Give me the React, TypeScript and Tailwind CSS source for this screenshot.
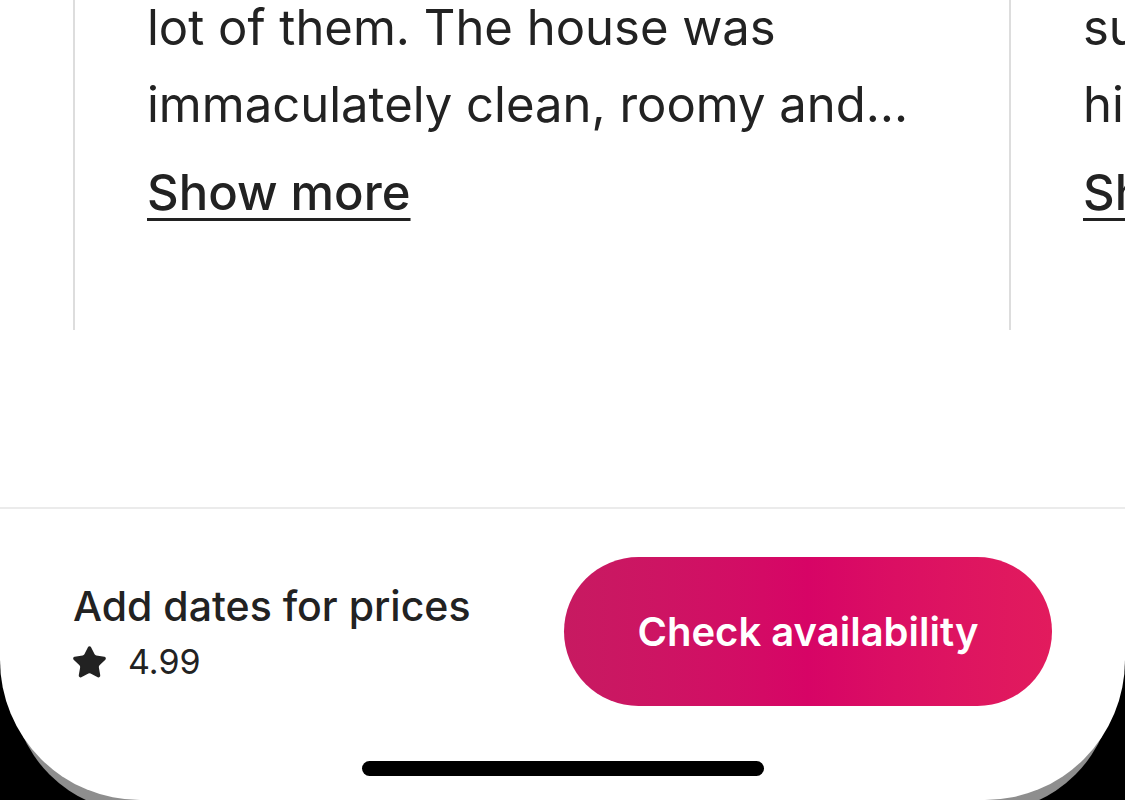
import { Star } from "lucide-react";

const reviews = [
  {
    lines: ["We had such a wonderful time and saw a", "lot of them. The house was", "immaculately clean, roomy and…"],
  },
  {
    lines: ["Beautiful place and the hosts were", "super helpful, answered all of", "highly recommend it to anyone…"],
  },
];

const App = () => {
  return (
    <div className="w-[1125px] h-[800px] overflow-hidden bg-black font-['Inter',sans-serif] text-[#222222]">
      <div className="h-full flex flex-col bg-white rounded-b-[140px] shadow-[0_24px_0_-12px_#8e8e8e]">
        {/* Reviews carousel */}
        <div className="flex h-[330px] pl-[73px] overflow-hidden shrink-0">
          {reviews.map((r, i) => (
            <div
              key={i}
              className="w-[936px] shrink-0 border-l-2 border-[#dddddd] pl-[72px] pr-[60px] pb-[107px] flex flex-col justify-end overflow-hidden"
            >
              <div className="text-[49px] leading-[77px] whitespace-nowrap">
                {r.lines.map((l, j) => (
                  <div key={j}>{l}</div>
                ))}
              </div>
              <a className="mt-[20px] text-[49px] leading-[60px] font-medium underline underline-offset-[8px] decoration-[3px] whitespace-nowrap">
                Show more
              </a>
            </div>
          ))}
        </div>

        <div className="flex-1" />

        {/* Footer bar */}
        <div className="border-t-2 border-[#ebebeb] h-[293px] shrink-0 flex flex-col">
          <div className="flex items-start justify-between px-[73px] pt-[48px]">
            <div className="flex flex-col mt-[25px]">
              <span className="text-[41px] leading-[48px] font-medium">Add dates for prices</span>
              <span className="flex items-center gap-[20px] mt-[6px] text-[34px] leading-[52px]">
                <Star className="w-[37px] h-[37px] -ml-[2px] fill-[#222222] text-[#222222]" strokeWidth={1.2} />
                4.99
              </span>
            </div>
            <button className="w-[488px] h-[149px] rounded-full bg-linear-to-r from-[#c71a61] via-[#d70466] to-[#e21b5d] text-white text-[40px] font-semibold">
              Check availability
            </button>
          </div>
          <div className="flex justify-center mt-[55px]">
            <div className="w-[402px] h-[15px] rounded-full bg-black" />
          </div>
        </div>
      </div>
    </div>
  );
};

export default App;
